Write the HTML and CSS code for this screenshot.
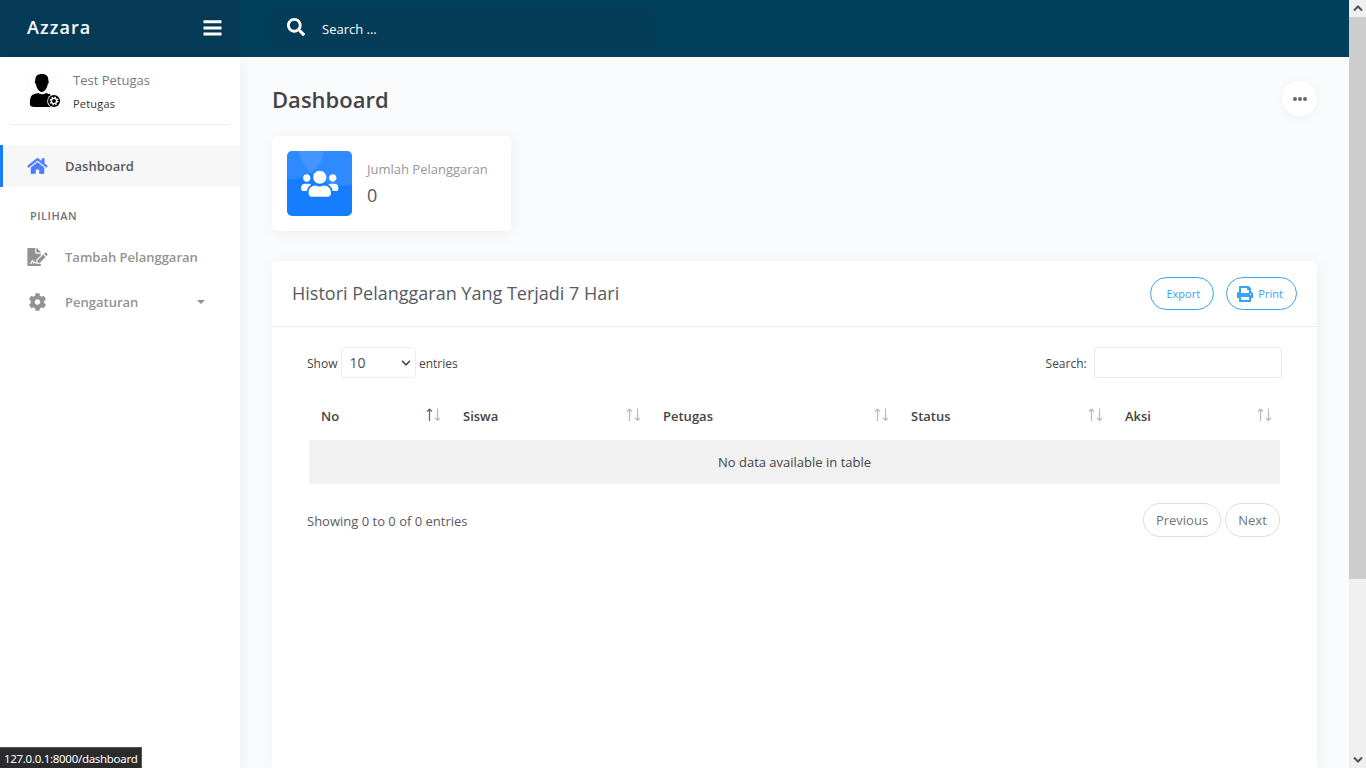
FILE: index.html
```html
<!DOCTYPE html>
<html lang="id">
<head>
<meta charset="utf-8">
<title>Azzara</title>
<link rel="stylesheet" href="styles.css">
</head>
<body>
<div class="app">
  <header class="topbar">
    <div class="brand">
      <span class="brand-name">Azzara</span>
      <svg class="bars" viewBox="0 0 18 16" fill="#fff"><path d="M0 .3h18v3H0zM0 6.4h18v3H0zM0 12.4h18v3H0z"/></svg>
    </div>
    <div class="nav">
      <div class="nav-search">
        <svg width="18" height="18" viewBox="0 0 512 512" fill="#fff"><path d="M505 442.7L405.3 343c-4.5-4.5-10.6-7-17-7H372c27.6-35.3 44-79.7 44-128C416 93.1 322.9 0 208 0S0 93.1 0 208s93.1 208 208 208c48.3 0 92.7-16.4 128-44v16.3c0 6.4 2.5 12.5 7 17l99.7 99.7c9.4 9.4 24.6 9.4 33.9 0l28.3-28.3c9.4-9.4 9.4-24.6.1-34zM208 336c-70.7 0-128-57.2-128-128 0-70.7 57.2-128 128-128 70.7 0 128 57.2 128 128 0 70.7-57.2 128-128 128z"/></svg>
        <span>Search ...</span>
      </div>
    </div>
  </header>
  <div class="body">
    <aside class="sidebar">
      <div class="user">
        <svg class="avatar" viewBox="0 0 40 40">
          <circle cx="20" cy="20" r="20" fill="#fdfdfd"/>
          <path d="M10.300 10.500c-.2-4.500 2.400-6.500 6.700-6.500s6.600 2.300 6.300 6.500c.8.800.6 2.800-.5 3.600-.7 4-3 8-6 8s-5.200-4-5.900-8c-1.300-.9-1.400-2.900-.6-3.600z"/>
          <path d="M5 35c-.2-6 .3-9.500 4-10.700 2-.7 3-.8 4.300-1.300 2.200 1.700 5.500 1.700 7.700 0l4.500 1.500 2 2V37H9c-2 0-3.700-.8-4-2z"/>
          <circle cx="29" cy="31" r="6.800" fill="#fff"/><circle cx="29" cy="31" r="6"/>
          <circle cx="29" cy="31" r="2.600" fill="none" stroke="#fff" stroke-width="1.300"/>
          <circle cx="29" cy="31" r="3.800" fill="none" stroke="#fff" stroke-width="1.300" stroke-dasharray="1.500 1.480"/>
        </svg>
        <div class="user-info"><span class="user-name">Test Petugas</span><span class="user-role">Petugas</span></div>
      </div>
      <nav class="menu">
        <a class="item active">
          <svg width="21" height="18" viewBox="0 0 576 512"><path d="M280.37 148.26L96 300.11V464a16 16 0 0 0 16 16l112.06-.29a16 16 0 0 0 15.92-16V368a16 16 0 0 1 16-16h64a16 16 0 0 1 16 16v95.64a16 16 0 0 0 16 16.05L464 480a16 16 0 0 0 16-16V300L295.67 148.26a12.19 12.19 0 0 0-15.3 0zM571.6 251.47L488 182.56V44.05a12 12 0 0 0-12-12h-56a12 12 0 0 0-12 12v72.61L318.47 43a48 48 0 0 0-61 0L4.34 251.47a12 12 0 0 0-1.6 16.9l25.5 31A12 12 0 0 0 45.15 301l235.22-193.74a12.19 12.19 0 0 1 15.3 0L530.9 301a12 12 0 0 0 16.9-1.6l25.5-31a12 12 0 0 0-1.7-16.93z"/></svg>
          <span>Dashboard</span>
        </a>
        <h4 class="section">PILIHAN</h4>
        <a class="item">
          <svg width="21" height="18" viewBox="0 0 576 512"><path d="M218.17 424.14c-2.95-5.92-8.09-6.52-10.17-6.52s-7.22.59-10.02 6.19l-7.67 15.34c-6.37 12.78-25.03 11.37-29.48-2.09L144 386.59l-10.61 31.88c-5.89 17.66-22.38 29.53-41 29.53H80c-8.84 0-16-7.16-16-16s7.160-16 16-16h12.390c4.830 0 9.110-3.080 10.640-7.660l18.190-54.640c3.300-9.810 12.440-16.410 22.780-16.410s19.480 6.590 22.770 16.410l13.880 41.640c19.750-16.190 54.060-9.700 66 14.160 1.890 3.780 5.490 5.950 9.360 6.260v-82.120l128-127.090V160H248c-13.200 0-24-10.800-24-24V0H24C10.700 0 0 10.700 0 24v464c0 13.300 10.700 24 24 24h336c13.300 0 24-10.700 24-24v-40l-128-.11c-16.120-.31-30.580-9.280-37.830-23.750zM384 121.900c0-6.300-2.500-12.400-7-16.900L279.100 7c-4.500-4.500-10.600-7-17-7H256v128h128v-6.100zm-96 225.060V416h68.990l161.680-162.780-67.880-67.880L288 346.960zm280.540-179.630l-31.870-31.870c-9.940-9.940-26.070-9.940-36.010 0l-27.250 27.250 67.880 67.880 27.250-27.250c9.950-9.940 9.950-26.070 0-36.010z"/></svg>
          <span>Tambah Pelanggaran</span>
        </a>
        <a class="item">
          <svg width="21" height="18" viewBox="0 0 512 512"><path d="M487.400 315.700l-42.600-24.600c4.300-23.200 4.300-47 0-70.200l42.600-24.600c4.900-2.800 7.100-8.600 5.500-14-11.100-35.600-30-67.800-54.700-94.600-3.800-4.100-10-5.100-14.800-2.300L380.800 110c-17.900-15.400-38.500-27.300-60.800-35.100V25.800c0-5.600-3.900-10.500-9.400-11.700-36.700-8.200-74.300-7.800-109.200 0-5.500 1.200-9.400 6.100-9.400 11.700V75c-22.200 7.900-42.800 19.800-60.800 35.100L88.700 85.500c-4.900-2.800-11-1.900-14.800 2.300-24.700 26.700-43.600 58.900-54.700 94.600-1.700 5.400.6 11.200 5.500 14L67.300 221c-4.300 23.200-4.300 47 0 70.200l-42.600 24.600c-4.900 2.800-7.100 8.600-5.500 14 11.100 35.600 30 67.800 54.700 94.600 3.800 4.100 10 5.100 14.800 2.300l42.600-24.600c17.900 15.400 38.500 27.300 60.800 35.100v49.200c0 5.600 3.900 10.500 9.400 11.700 36.700 8.200 74.300 7.800 109.200 0 5.500-1.200 9.400-6.100 9.400-11.700v-49.200c22.200-7.900 42.800-19.800 60.800-35.100l42.600 24.600c4.900 2.800 11 1.900 14.800-2.300 24.700-26.700 43.600-58.900 54.700-94.600 1.500-5.500-.7-11.300-5.600-14.100zM256 336c-44.100 0-80-35.900-80-80s35.900-80 80-80 80 35.900 80 80-35.900 80-80 80z"/></svg>
          <span>Pengaturan</span>
          <i class="caret"></i>
        </a>
      </nav>
    </aside>
    <main class="main">
      <div class="page-head">
        <h1>Dashboard</h1>
        <div class="more"><i></i><i></i><i></i></div>
      </div>
      <section class="stat">
        <div class="stat-icon">
          <svg width="65" height="65" viewBox="0 0 65 65">
            <rect width="65" height="65" fill="#177dff"/>
            <circle cx="4" cy="-6" r="34" fill="#fff" fill-opacity=".1"/>
            <circle cx="54" cy="-8" r="43" fill="#fff" fill-opacity=".1"/>
            <g fill="#fff" transform="translate(14.200 17.800) scale(.058)"><path d="M96 224c35.300 0 64-28.700 64-64s-28.700-64-64-64-64 28.700-64 64 28.700 64 64 64zm448 0c35.300 0 64-28.700 64-64s-28.700-64-64-64-64 28.700-64 64 28.700 64 64 64zm32 32h-64c-17.600 0-33.500 7.100-45.100 18.600 40.300 22.100 68.900 62 75.100 109.400h66c17.700 0 32-14.300 32-32v-32c0-35.300-28.700-64-64-64zm-256 0c61.900 0 112-50.100 112-112S381.900 32 320 32 208 82.100 208 144s50.100 112 112 112zm76.800 32h-8.300c-20.800 10-43.900 16-68.500 16s-47.600-6-68.500-16h-8.300C179.600 288 128 339.600 128 403.200V432c0 26.500 21.500 48 48 48h288c26.500 0 48-21.500 48-48v-28.800c0-63.600-51.600-115.200-115.200-115.200zm-223.700-13.400C161.500 263.100 145.600 256 128 256H64c-35.300 0-64 28.700-64 64v32c0 17.700 14.300 32 32 32h65.900c6.300-47.400 34.900-87.300 75.200-109.400z"/></g>
          </svg>
        </div>
        <div class="stat-text"><span class="stat-label">Jumlah Pelanggaran</span><span class="stat-value">0</span></div>
      </section>
      <section class="card">
        <div class="card-head">
          <h2>Histori Pelanggaran Yang Terjadi 7 Hari</h2>
          <a class="pill export">Export</a>
          <a class="pill print"><svg width="16" height="16" viewBox="0 0 512 512"><path d="M464 192h-16V81.941a24 24 0 0 0-7.029-16.970L383.029 7.029A24 24 0 0 0 366.059 0H88C74.745 0 64 10.745 64 24v168H48c-26.510 0-48 21.490-48 48v132c0 6.627 5.373 12 12 12h52v104c0 13.255 10.745 24 24 24h336c13.255 0 24-10.745 24-24V384h52c6.627 0 12-5.373 12-12V240c0-26.510-21.490-48-48-48zm-80 256H128v-96h256v96zM384 224H128V64h192v48c0 8.837 7.163 16 16 16h48v96zm48 72c-13.255 0-24-10.745-24-24s10.745-24 24-24 24 10.745 24 24-10.745 24-24 24z"/></svg>Print</a>
        </div>
        <div class="card-body">
          <div class="controls">
            <span>Show</span>
            <div class="select"><span>10</span><svg width="10" height="6" viewBox="0 0 10 6" fill="none" stroke="#444" stroke-width="1.600"><path d="M1 .8l4 4 4-4"/></svg></div>
            <span>entries</span>
            <span class="search-label">Search:</span>
            <div class="field"></div>
          </div>
          <div class="thead">
            <div class="th">No<svg class="sort" viewBox="0 0 16 14"><path d="M4.500 13V1M2 3.500L4.500 1 7 3.500" stroke="#5e6670"/><path d="M12.500 .5V12.500M10 10l2.500 2.500 2.500-2.500" stroke="#b9b9b5"/></svg></div>
            <div class="th">Siswa<svg class="sort" viewBox="0 0 16 14"><path d="M4.500 13V1M2 3.500L4.500 1 7 3.500M12.500 .5V12.500M10 10l2.500 2.500 2.500-2.500" stroke="#b9b9b5"/></svg></div>
            <div class="th">Petugas<svg class="sort" viewBox="0 0 16 14"><path d="M4.500 13V1M2 3.500L4.500 1 7 3.500M12.500 .5V12.500M10 10l2.500 2.500 2.500-2.500" stroke="#b9b9b5"/></svg></div>
            <div class="th">Status<svg class="sort" viewBox="0 0 16 14"><path d="M4.500 13V1M2 3.500L4.500 1 7 3.500M12.500 .5V12.500M10 10l2.500 2.500 2.500-2.500" stroke="#b9b9b5"/></svg></div>
            <div class="th last">Aksi<svg class="sort" viewBox="0 0 16 14"><path d="M4.500 13V1M2 3.500L4.500 1 7 3.500M12.500 .5V12.500M10 10l2.500 2.500 2.500-2.500" stroke="#b9b9b5"/></svg></div>
          </div>
          <div class="empty">No data available in table</div>
          <div class="foot">
            <span class="info">Showing 0 to 0 of 0 entries</span>
            <a class="page prev">Previous</a>
            <a class="page next">Next</a>
          </div>
        </div>
      </section>
    </main>
  </div>
</div>
<div class="scrollbar">
  <div class="arrow"><svg width="10" height="7" viewBox="0 0 10 7" fill="none" stroke="#505050" stroke-width="2"><path d="M1 5.500l4-4 4 4"/></svg></div>
  <div class="thumb"></div>
  <div class="arrow end"><svg width="10" height="7" viewBox="0 0 10 7" fill="none" stroke="#505050" stroke-width="2"><path d="M1 1.500l4 4 4-4"/></svg></div>
</div>
<div class="status">127.0.0.1:8000/dashboard</div>
</body>
</html>
```
FILE: styles.css
```css
* { box-sizing: border-box; }
body {
  margin: 0;
  height: 768px;
  display: flex;
  overflow: hidden;
  font-family: "Open Sans", "Noto Sans", sans-serif;
  font-size: 13px;
  color: #575962;
  background: #f9fbfd;
}
h1, h2, h4 { margin: 0; }
.app { width: 1349px; height: 768px; display: flex; flex-direction: column; }

.topbar { height: 57px; flex: none; display: flex; background: #003f5c; }
.brand {
  width: 240px;
  padding: 0 18px 3px 27px;
  display: flex;
  align-items: center;
  justify-content: space-between;
  background: #043a55;
}
.brand-name { color: #fff; font-size: 18px; font-weight: 600; letter-spacing: 1.1px; }
.bars { width: 19px; height: 16px; margin-top: 1px; }
.nav { padding: 9px 0 0 30px; }
.nav-search {
  width: 384px;
  height: 39px;
  padding-left: 17px;
  display: flex;
  align-items: center;
  gap: 17px;
  border-radius: 5px;
  background: #043b56;
  color: #fff;
}
.nav-search svg { margin-bottom: 3px; }
.nav-search span { margin-top: 1px; }

.body { flex: 1; display: flex; min-height: 0; }
.sidebar { width: 240px; background: #fff; box-shadow: 4px 4px 10px rgba(69, 65, 78, .06); }
.user {
  height: 68px;
  margin: 0 10px;
  padding: 13px 0 0 15px;
  display: flex;
  gap: 8px;
  border-bottom: 1px solid #eee;
}
.avatar { width: 40px; height: 40px; }
.user-info { display: flex; flex-direction: column; }
.user-name { line-height: 20px; color: #777; }
.user-role { margin-top: 5px; font-size: 11px; line-height: 18px; color: #333; font-weight: 500; letter-spacing: .2px; }
.menu { padding-top: 20px; }
.item {
  height: 42px;
  padding: 0 35px 0 27px;
  display: flex;
  align-items: center;
  color: #929292;
  font-weight: 600;
}
.item svg { margin-right: 17px; fill: #929292; }
.item.active { padding-left: 24px; border-left: 3px solid #177dff; background: #f7f7f7; color: #575962; }
.item.active svg { fill: #4d7cfe; }
.item + .item { margin-top: 3px; }
.section { margin: 20px 0 11px 30px; line-height: 18px; font-size: 11px; font-weight: 600; letter-spacing: .5px; color: #727275; }
.caret { margin-left: auto; border: 4px solid transparent; border-top-color: #929292; border-bottom: 0; }

.main { width: 1109px; padding: 24px 32px 0; display: flex; flex-direction: column; }
.page-head { height: 36px; display: flex; justify-content: space-between; }
.page-head h1 { font-size: 22px; line-height: 37px; font-weight: 600; color: #444; }
.more {
  width: 35px;
  height: 35px;
  display: flex;
  justify-content: center;
  align-items: center;
  gap: 1px;
  border-radius: 50%;
  background: #fff;
  box-shadow: 0 2px 12px rgba(69, 65, 120, .06);
}
.more i { width: 4px; height: 4px; border-radius: 50%; background: #666; }

.stat {
  width: 239px;
  height: 95px;
  margin-top: 19px;
  padding: 15px;
  display: flex;
  gap: 15px;
  border-radius: 5px;
  background: #fff;
  box-shadow: 2px 2px 15px rgba(69, 65, 78, .07);
}
.stat-icon { width: 65px; height: 65px; border-radius: 5px; overflow: hidden; }
.stat-text { display: flex; flex-direction: column; white-space: nowrap; }
.stat-label { margin-top: 8px; line-height: 20px; color: #979797; }
.stat-value { margin-top: 2px; font-size: 18px; line-height: 28px; color: #575962; }

.card {
  width: 1045px;
  flex: 1;
  margin-top: 30px;
  border-radius: 5px 5px 0 0;
  background: #fff;
  box-shadow: 2px 2px 15px rgba(69, 65, 78, .07);
}
.card-head { height: 66px; padding: 0 20px; display: flex; align-items: center; border-bottom: 1px solid #ebecec; }
.card-head h2 { margin-right: auto; padding-bottom: 2px; font-size: 18px; font-weight: 400; color: #575962; }
.pill {
  height: 33px;
  display: flex;
  align-items: center;
  border: 1px solid #35a4f5;
  border-radius: 17px;
  color: #35a4f5;
  fill: #35a4f5;
  font-size: 11px;
}
.export { width: 64px; padding-left: 15.5px; }
.print { width: 71px; margin-left: 12px; padding-left: 10px; gap: 5.3px; }

.card-body { padding: 20px 35px 0; }
.controls { height: 31px; display: flex; align-items: center; font-size: 12px; color: #444; }
.controls > span { padding-top: 2px; }
.select {
  width: 75px;
  height: 31px;
  margin: 0 2.5px 0 4px;
  padding: 0 4px 0 7px;
  display: flex;
  align-items: center;
  justify-content: space-between;
  border: 1px solid #ebedf2;
  border-radius: 4px;
  font-size: 14px;
  color: #495057;
}
.search-label { margin-left: auto; }
.field { width: 188px; height: 31px; margin-left: 7.3px; border: 1px solid #e8e8ea; border-radius: 4px; }
.thead {
  height: 48px;
  margin: 14px 2px 0;
  display: grid;
  grid-template-columns: 142px 200px 248px 214px 167px;
}
.th { padding: 0 10px 0 12px; display: flex; align-items: center; justify-content: space-between; font-weight: 600; color: #444; }
.th.last { padding-right: 8px; }
.sort { width: 16px; height: 14px; margin-bottom: 2px; fill: none; stroke-width: 1.2; }
.empty { height: 44px; margin: 0 2px; line-height: 44px; text-align: center; background: #f1f1f1; color: #444; }
.foot { margin: 19px 2px 0 0; display: flex; }
.info { margin-right: auto; line-height: 36px; }
.page { height: 34px; line-height: 32px; text-align: center; border: 1px solid #ddd; border-radius: 17px; color: #6c757d; }
.prev { width: 78px; }
.next { width: 55px; margin-left: 4px; }

.scrollbar { width: 17px; display: flex; flex-direction: column; background: #f0f0f0; }
.arrow { height: 17px; display: flex; align-items: center; justify-content: center; }
.thumb { height: 562px; background: #cdcdcd; }
.end { margin-top: auto; }

.status {
  position: absolute;
  left: 0;
  bottom: 0;
  width: 142px;
  height: 21px;
  padding-left: 4px;
  border-top: 1px solid #555;
  border-right: 1px solid #555;
  background: #2b2b2d;
  color: #fff;
  font: 11.5px/21px "Noto Sans", "Open Sans", sans-serif;
  letter-spacing: -.3px;
  white-space: nowrap;
}
```
